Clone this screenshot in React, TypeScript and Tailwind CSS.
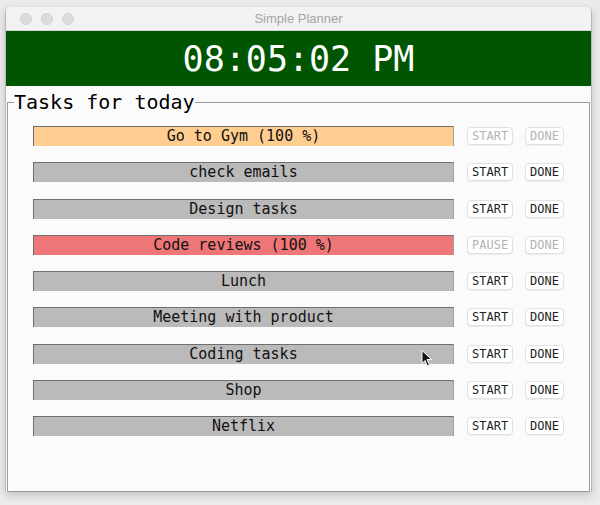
// Simple Planner – a small task timer window.

const MONO = "font-['DejaVu_Sans_Mono','Liberation_Mono',monospace]";

type Task = {
  name: string;
  state: "idle" | "running" | "finished";
  progress?: number;
};

const TASKS: Task[] = [
  { name: "Go to Gym", state: "finished", progress: 100 },
  { name: "check emails", state: "idle" },
  { name: "Design tasks", state: "idle" },
  { name: "Code reviews", state: "running", progress: 100 },
  { name: "Lunch", state: "idle" },
  { name: "Meeting with product", state: "idle" },
  { name: "Coding tasks", state: "idle" },
  { name: "Shop", state: "idle" },
  { name: "Netflix", state: "idle" },
];

function TrafficLight() {
  return (
    <span className="h-[12px] w-[12px] rounded-full border border-[#d2d1d2] bg-[#dddcdd]" />
  );
}

function SmallButton({ label, disabled }: { label: string; disabled?: boolean }) {
  return (
    <button
      type="button"
      className={[
        "flex h-[18px] items-center justify-center rounded-[4px] border border-[#e2e1e2] bg-white px-[4px]",
        "text-[12px] leading-none shadow-[0_1px_1px_rgba(0,0,0,0.06)]",
        MONO,
        disabled ? "text-[#b4b3b4]" : "text-[#1e1e1e]",
      ].join(" ")}
    >
      {label}
    </button>
  );
}

function TaskRow({ task }: { task: Task }) {
  const bar =
    task.state === "finished"
      ? "bg-[#ffcd90]"
      : task.state === "running"
        ? "bg-[#ee7677]"
        : "bg-[#bbbabb]";
  const label =
    task.progress !== undefined ? `${task.name} (${task.progress} %)` : task.name;

  return (
    <div className="flex h-[36.25px] items-center">
      <div
        className={[
          "flex h-[20px] w-[421px] items-center justify-center",
          "border-t border-l border-t-[#6f6f6f] border-l-[#6f6f6f] border-r border-r-[#a09fa0]",
          "text-[15px] leading-none text-[#111]",
          MONO,
          bar,
        ].join(" ")}
      >
        {label}
      </div>
      <div className="ml-[13px] w-[45px]">
        <SmallButton
          label={task.state === "running" ? "PAUSE" : "START"}
          disabled={task.state !== "idle"}
        />
      </div>
      <div className="ml-[13px] w-[37px]">
        <SmallButton label="DONE" disabled={task.state !== "idle"} />
      </div>
    </div>
  );
}

export default function App() {
  return (
    <div className="relative h-[505px] w-[600px] overflow-hidden bg-[#ebebeb] pl-[5px] pt-[7px]">
      <div className="flex h-[485px] w-[587px] flex-col overflow-hidden rounded-t-[5px] border-x border-[#b9b8b9] bg-[#fcfbfc] shadow-[0_3px_8px_rgba(0,0,0,0.18)]">
        {/* Title bar */}
        <div className="relative flex h-[24px] items-center border-b border-[#d6d5d6] bg-[#f3f2f3]">
          <div className="flex items-center gap-[9px] pl-[14px]">
            <TrafficLight />
            <TrafficLight />
            <TrafficLight />
          </div>
          <span className="absolute inset-x-0 text-center font-['Liberation_Sans',sans-serif] text-[13px] text-[#a5a4a5]">
            Simple Planner
          </span>
        </div>

        {/* Clock */}
        <div
          className={[
            "flex h-[55px] items-center justify-center bg-[#005500] pt-[2px] text-[35px] leading-none text-white",
            MONO,
          ].join(" ")}
        >
          08:05:02 PM
        </div>

        {/* Task list */}
        <fieldset className="mx-[1px] mt-[4px] flex-1 border border-[#9a999a]">
          <legend className={["ml-[6px] text-[20px] leading-[24px] text-black", MONO].join(" ")}>
            Tasks for today
          </legend>
          <div className="flex flex-col pl-[25px] pt-[4px]">
            {TASKS.map((t) => (
              <TaskRow key={t.name} task={t} />
            ))}
          </div>
        </fieldset>
      </div>

      {/* Mouse pointer */}
      <svg
        viewBox="0 0 12 18"
        className="absolute left-[421px] top-[349px] h-[19px] w-[12px]"
        aria-hidden
      >
        <path
          d="M1 1 L1 14 L4 11 L6.5 16.5 L8.5 15.5 L6 10 L10.5 10 Z"
          fill="#111"
          stroke="#fff"
          strokeWidth="1"
          strokeLinejoin="round"
        />
      </svg>
    </div>
  );
}
